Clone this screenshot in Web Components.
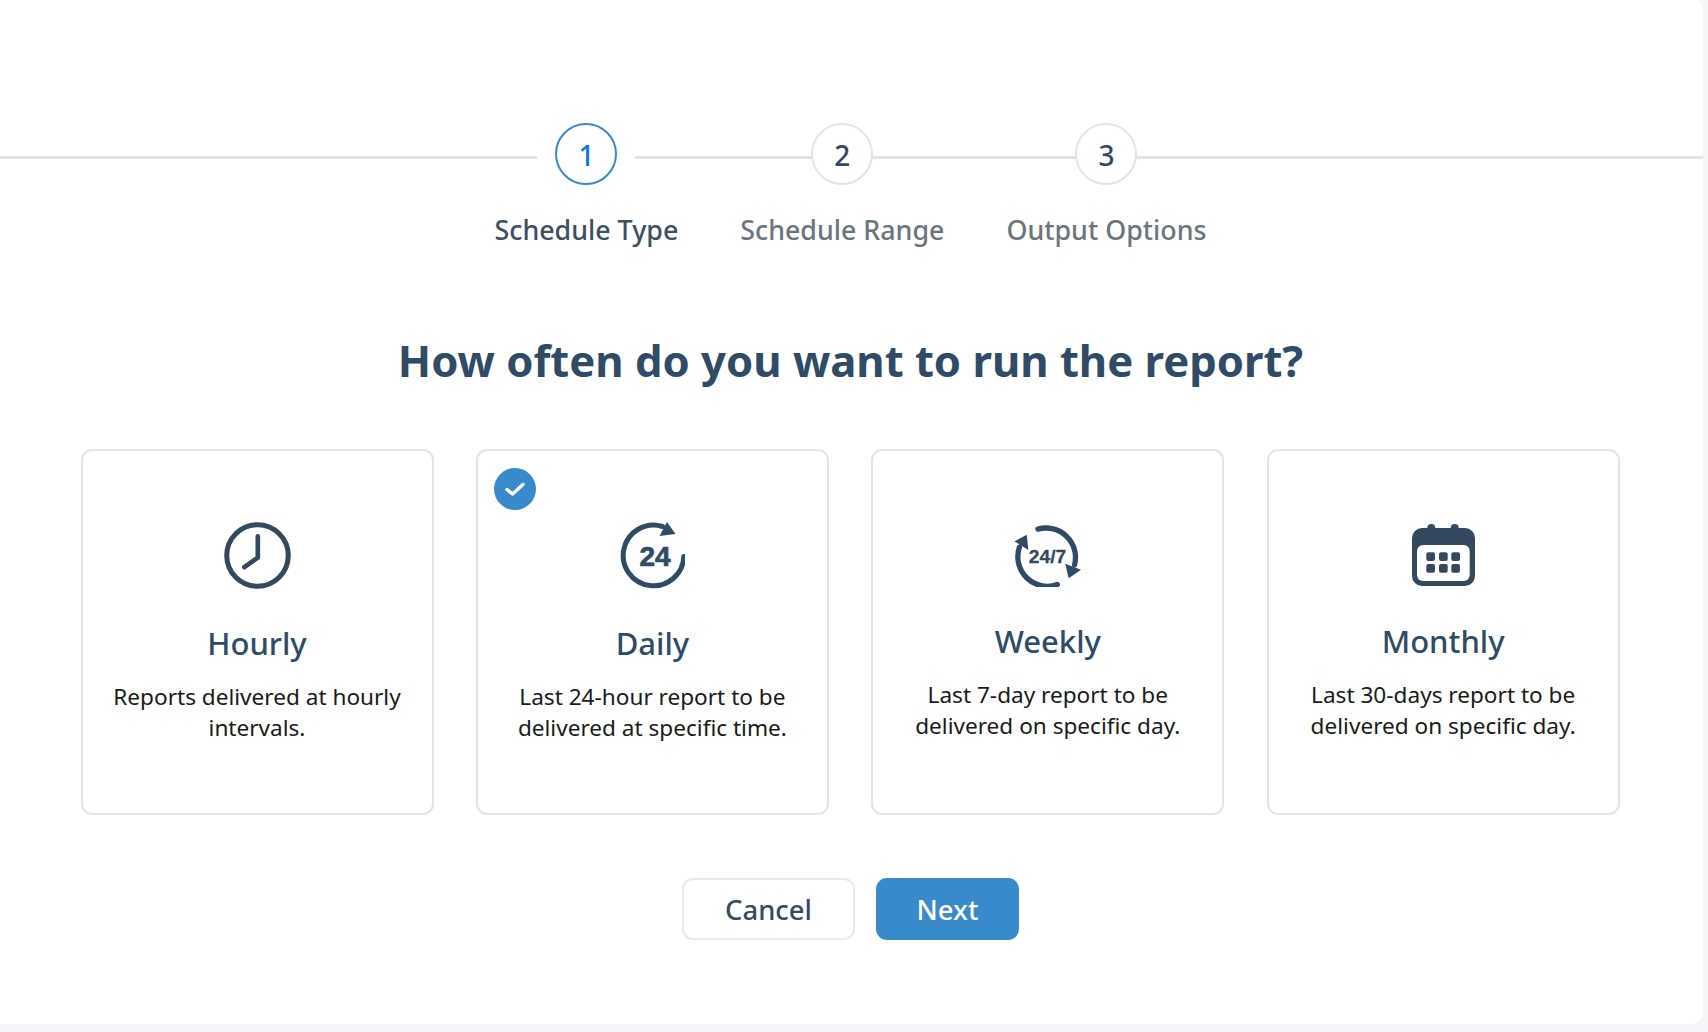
<!DOCTYPE html>
<html lang="en">
<head>
<meta charset="utf-8">
<title>Schedule report</title>
<style>
  html, body { margin: 0; height: 100%; }
  body { background: #f3f5f9; font-family: "Noto Sans", "Open Sans", sans-serif; overflow: hidden; }
</style>
</head>
<body>
<report-wizard>
  <wizard-stepper slot="steps">
    <wizard-step num="1" active>Schedule Type</wizard-step>
    <wizard-step num="2">Schedule Range</wizard-step>
    <wizard-step num="3">Output Options</wizard-step>
  </wizard-stepper>
  <span slot="title">How often do you want to run the report?</span>
  <schedule-card icon="hourly" label="Hourly">Reports delivered at hourly intervals.</schedule-card>
  <schedule-card icon="daily" label="Daily" selected>Last 24-hour report to be delivered at specific time.</schedule-card>
  <schedule-card icon="weekly" label="Weekly">Last 7-day report to be delivered on specific day.</schedule-card>
  <schedule-card icon="monthly" label="Monthly">Last 30-days report to be delivered on specific day.</schedule-card>
  <wizard-button slot="actions">Cancel</wizard-button>
  <wizard-button slot="actions" primary>Next</wizard-button>
</report-wizard>

<script>
const ICONS = {
  hourly: `<svg width="67" height="67" viewBox="0 0 66 66" fill="none" stroke="#34495e">
      <circle cx="33" cy="33" r="30.3" stroke-width="5"/>
      <path d="M33.3 14V35L20 44.5" stroke-width="4.6" stroke-linecap="round" stroke-linejoin="round"/>
    </svg>`,
  daily: `<svg width="66" height="67" viewBox="-1.5 0 66 66" fill="none">
      <path d="M63.3 34A30.3 30.3 0 1 1 42 4" stroke="#2f4b68" stroke-width="5" stroke-linecap="round"/>
      <path d="M46.5 -.5L55 11.5 39 13.5Z" fill="#2f4b68"/>
      <text x="34.5" y="43" text-anchor="middle" font-family="Liberation Sans" font-weight="700" font-size="28" fill="#2f4b68" stroke="#2f4b68" stroke-width=".7">24</text>
    </svg>`,
  weekly: `<svg width="69" height="65" viewBox="-1.5 -1.5 69 66" fill="none">
      <path d="M23.3 5.7A30 30 0 0 1 60.5 42" stroke="#2f4b68" stroke-width="5.4" stroke-linecap="round"/>
      <path d="M43 62A30 30 0 0 1 4.5 24" stroke="#2f4b68" stroke-width="5.4" stroke-linecap="round"/>
      <path d="M51 41L67 47 54.5 55.5Z" fill="#2f4b68"/>
      <path d="M-.5 18L12 11.5 13.5 27Z" fill="#2f4b68"/>
      <text x="33" y="40" text-anchor="middle" font-family="Liberation Sans" font-weight="700" font-size="19.5" fill="#34495e" stroke="#34495e" stroke-width=".3">24/7</text>
    </svg>`,
  monthly: `<svg width="63" height="65" viewBox="0 -2 63 65" fill="#34495e">
      <rect x="15.3" y="0" width="8" height="10" rx="4"/>
      <rect x="38.7" y="0" width="8" height="10" rx="4"/>
      <rect x="0" y="4" width="63" height="58" rx="10"/>
      <rect x="5" y="21" width="52.7" height="36" rx="6" fill="#fff"/>
      <rect x="14.3" y="28.3" width="8.7" height="8.7" rx="2"/>
      <rect x="27" y="28.3" width="8.7" height="8.7" rx="2"/>
      <rect x="39.3" y="28.3" width="8.7" height="8.7" rx="2"/>
      <rect x="14.3" y="40" width="8.7" height="8.7" rx="2"/>
      <rect x="27" y="40" width="8.7" height="8.7" rx="2"/>
      <rect x="39.3" y="40" width="8.7" height="8.7" rx="2"/>
    </svg>`,
};

class ReportWizard extends HTMLElement {
  constructor() {
    super();
    this.attachShadow({ mode: "open" }).innerHTML = `
      <style>
        :host {
          display: flex;
          flex-direction: column;
          width: 1703px;
          height: 1024px;
          box-sizing: border-box;
          padding-top: 123px;
          background: #fff;
          border-radius: 0 8px 12px 0;
          overflow: hidden;
        }
        h1 {
          margin: 82px 0 0;
          padding-right: 2px;
          height: 61px;
          font-size: 43.6px;
          line-height: 61px;
          font-weight: 700;
          text-align: center;
          color: #2f4b66;
        }
        .cards {
          display: grid;
          grid-template-columns: repeat(4, 353px);
          column-gap: 42.4px;
          padding-left: 80.5px;
          margin-top: 58px;
        }
        .actions {
          display: flex;
          justify-content: center;
          gap: 21px;
          padding-right: 2px;
          margin-top: 63px;
        }
      </style>
      <slot name="steps"></slot>
      <h1><slot name="title"></slot></h1>
      <div class="cards"><slot></slot></div>
      <div class="actions"><slot name="actions"></slot></div>
    `;
  }
}

class WizardStepper extends HTMLElement {
  constructor() {
    super();
    this.attachShadow({ mode: "open" }).innerHTML = `
      <style>
        :host {
          display: flex;
          justify-content: center;
          gap: 62px;
          padding-right: 2px;
          background: linear-gradient(#e4e4e4, #e4e4e4) 0 33px / 100% 3px no-repeat;
        }
      </style>
      <slot></slot>
    `;
  }
}

class WizardStep extends HTMLElement {
  constructor() {
    super();
    this.attachShadow({ mode: "open" }).innerHTML = `
      <style>
        :host {
          display: flex;
          flex-direction: column;
          align-items: center;
          font-size: 26.8px;
          font-weight: 500;
          color: #6c757d;
        }
        :host([active]) { color: #3d4f63; }
        .num {
          box-sizing: border-box;
          width: 62px;
          height: 62px;
          padding-top: 2px;
          display: flex;
          align-items: center;
          justify-content: center;
          border: 2px solid #e4e4e4;
          border-radius: 50%;
          background: #fff;
          font-size: 28px;
          color: #34495e;
        }
        :host([active]) .num {
          border-color: #388acb;
          color: #0a78d8;
          box-shadow: 0 0 0 18px #fff;
        }
        .label {
          position: relative;
          margin-top: 27px;
          line-height: 36px;
          white-space: nowrap;
        }
      </style>
      <div class="num"></div>
      <div class="label"><slot></slot></div>
    `;
    this.shadowRoot.querySelector(".num").textContent = this.getAttribute("num");
  }
}

class ScheduleCard extends HTMLElement {
  constructor() {
    super();
    this.attachShadow({ mode: "open" }).innerHTML = `
      <style>
        :host {
          display: flex;
          flex-direction: column;
          align-items: center;
          position: relative;
          box-sizing: border-box;
          height: 366px;
          padding: 71px 20px 0;
          border: 2px solid #e4e4e4;
          border-radius: 11px;
          background: #fff;
          text-align: center;
        }
        .icon { display: flex; }
        h2 {
          margin: 32px 0 0;
          font-size: 31px;
          line-height: 44px;
          font-weight: 500;
          color: #2f4b66;
        }
        p {
          margin: 17px 0 0;
          font-size: 22.6px;
          line-height: 30.7px;
          color: #1a1a1a;
        }
        .check {
          display: none;
          position: absolute;
          top: 17px;
          left: 16px;
          width: 42px;
          height: 42px;
          border-radius: 50%;
          background: #388acb;
          align-items: center;
          justify-content: center;
        }
        :host([selected]) .check { display: flex; }
      </style>
      <div class="check">
        <svg width="20" height="16" viewBox="0 0 20 16" fill="none" stroke="#fff" stroke-width="3.4" stroke-linecap="round" stroke-linejoin="round"><path d="M2 8.5L7.5 13 18 3.5"/></svg>
      </div>
      <div class="icon"></div>
      <h2></h2>
      <p><slot></slot></p>
    `;
    this.shadowRoot.querySelector(".icon").innerHTML = ICONS[this.getAttribute("icon")];
    this.shadowRoot.querySelector("h2").textContent = this.getAttribute("label");
  }
}

class WizardButton extends HTMLElement {
  constructor() {
    super();
    this.attachShadow({ mode: "open" }).innerHTML = `
      <style>
        :host {
          display: inline-flex;
          align-items: center;
          justify-content: center;
          box-sizing: border-box;
          width: 173px;
          height: 62px;
          border: 2px solid #eaeaea;
          border-radius: 11px;
          background: #fff;
          font-size: 27.4px;
          font-weight: 500;
          color: #3a4a5e;
          cursor: pointer;
        }
        :host([primary]) {
          width: 143px;
          background: #388acb;
          border-color: #388acb;
          color: #fff;
        }
      </style>
      <slot></slot>
    `;
  }
}

customElements.define("report-wizard", ReportWizard);
customElements.define("wizard-stepper", WizardStepper);
customElements.define("wizard-step", WizardStep);
customElements.define("schedule-card", ScheduleCard);
customElements.define("wizard-button", WizardButton);
</script>
</body>
</html>
